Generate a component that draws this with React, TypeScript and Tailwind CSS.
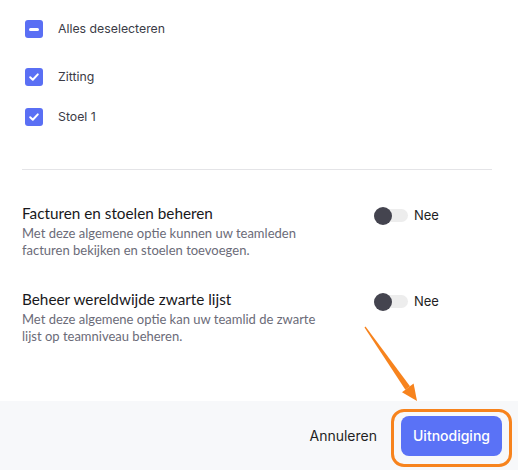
import React from 'react';

const Checkbox = ({ mixed }: { mixed?: boolean }) => (
    <span className="w-[18px] h-[18px] rounded-[3px] bg-[#5a6ff4] flex items-center justify-center shrink-0">
        {mixed ? (
            <span className="w-[10px] h-[3px] rounded-full bg-white" />
        ) : (
            <svg width="12" height="12" viewBox="0 0 12 12" fill="none">
                <path d="M2.2 6.3 L4.8 8.8 L9.8 3.4" stroke="white" strokeWidth="2" strokeLinecap="round" strokeLinejoin="round" />
            </svg>
        )}
    </span>
);

const Toggle = () => (
    <div className="flex items-center gap-[6px]">
        <div className="relative w-[34px] h-[18px] flex items-center">
            <div className="w-[34px] h-[13px] rounded-full bg-[#ededed]" />
            <div className="absolute left-0 top-0 w-[18px] h-[18px] rounded-full bg-[#44444f]" />
        </div>
        <span className="text-[13px] text-[#1f1f24] font-['Inter',sans-serif]">Nee</span>
    </div>
);

const Setting = ({ title, desc }: { title: string; desc: string[] }) => (
    <div className="flex items-start pl-[22px]">
        <div className="w-[352px] font-['Lato',sans-serif]">
            <h3 className="text-[15.3px] leading-[20px] text-[#18181b]">{title}</h3>
            <p className="mt-[2px] text-[13px] leading-[17px] text-[#6b6b78]">
                {desc.map((d, i) => (
                    <span key={i} className="block">{d}</span>
                ))}
            </p>
        </div>
        <div className="pt-[3px]">
            <Toggle />
        </div>
    </div>
);

export default function App() {
    return (
        <div className="relative w-[518px] h-[470px] bg-white overflow-hidden font-['Inter',sans-serif] flex flex-col">
            {/* checkboxes */}
            <div className="pl-[25px] pt-[20px]">
                <div className="flex items-center gap-[15px] h-[18px]">
                    <Checkbox mixed />
                    <span className="text-[12.3px] text-[#3b3b46]">Alles deselecteren</span>
                </div>
                <div className="flex items-center gap-[15px] h-[18px] mt-[30px]">
                    <Checkbox />
                    <span className="text-[12.3px] text-[#3b3b46]">Zitting</span>
                </div>
                <div className="flex items-center gap-[15px] h-[18px] mt-[22px]">
                    <Checkbox />
                    <span className="text-[12.3px] text-[#3b3b46]">Stoel 1</span>
                </div>
            </div>

            <div className="mx-[22px] w-[470px] h-px bg-[#e4e4e7] mt-[43px]" />

            <div className="mt-[33px] flex flex-col gap-[30px]">
                <Setting
                    title="Facturen en stoelen beheren"
                    desc={['Met deze algemene optie kunnen uw teamleden', 'facturen bekijken en stoelen toevoegen.']}
                />
                <Setting
                    title="Beheer wereldwijde zwarte lijst"
                    desc={['Met deze algemene optie kan uw teamlid de zwarte', 'lijst op teamniveau beheren.']}
                />
            </div>

            {/* footer */}
            <div className="mt-auto h-[69px] bg-[#f7f8fa] flex items-center justify-end pr-[16px] gap-[24px]">
                <button className="text-[14px] text-[#1f1f24]">Annuleren</button>
                <button className="w-[101px] h-[40px] rounded-[8px] bg-[#5a72f6] text-white text-[14px] font-medium">
                    Uitnodiging
                </button>
            </div>

            {/* annotation overlay */}
            <div className="absolute left-[391px] top-[409px] w-[121px] h-[58px] rounded-[13px] border-[3px] border-[#f7831d] pointer-events-none" />
            <svg className="absolute inset-0 pointer-events-none" width="518" height="470" viewBox="0 0 518 470">
                <polygon points="364.5,327.4 365.5,326.6 410,386.2 405.4,389.8" fill="#f7831d" />
                <polygon points="417,401 402,392.3 413.6,383.6" fill="#f7831d" />
            </svg>
        </div>
    );
}
